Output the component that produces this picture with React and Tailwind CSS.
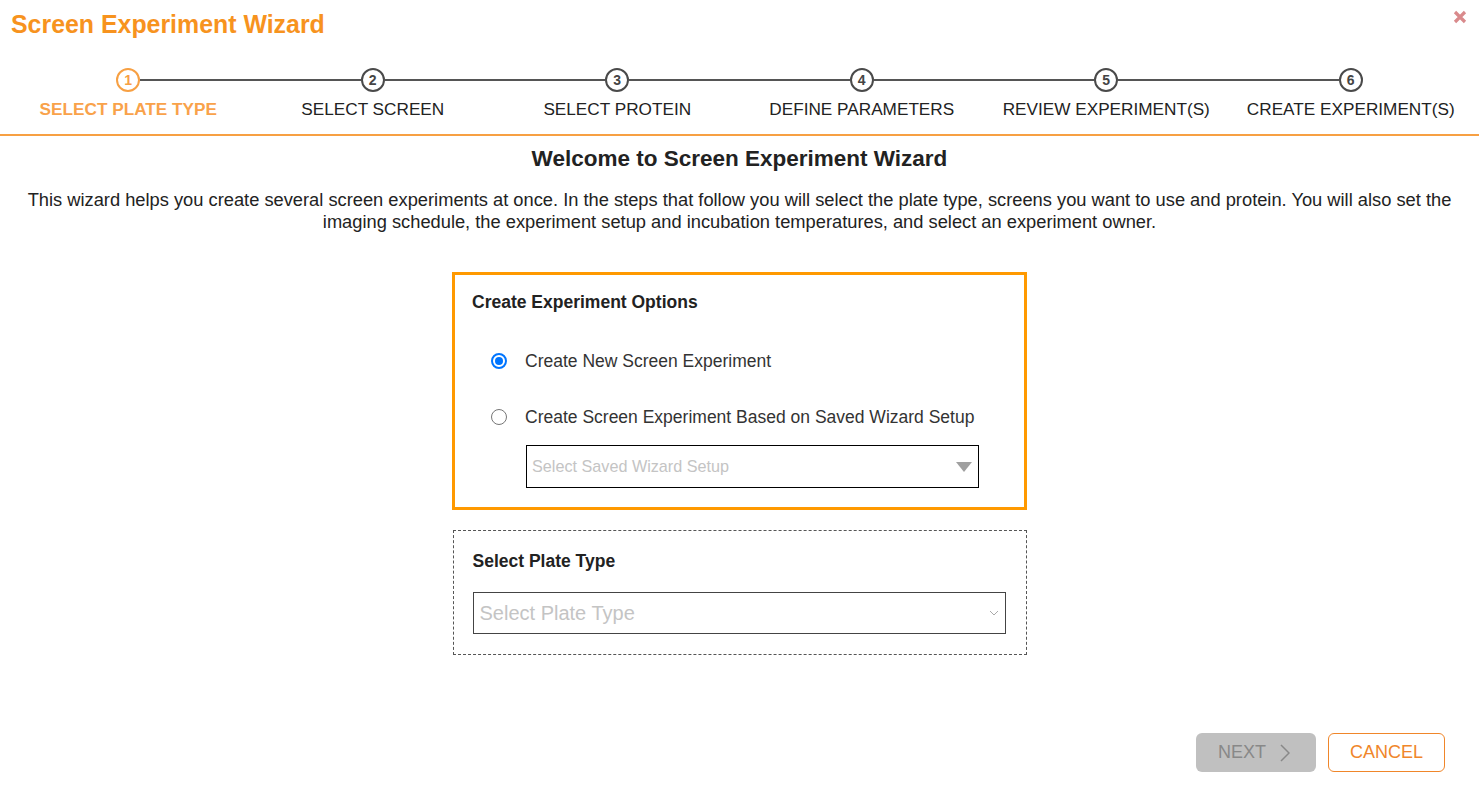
import React from "react";

const steps = [
  "SELECT PLATE TYPE",
  "SELECT SCREEN",
  "SELECT PROTEIN",
  "DEFINE PARAMETERS",
  "REVIEW EXPERIMENT(S)",
  "CREATE EXPERIMENT(S)",
];

function Step({ i, label }) {
  const active = i === 0;
  return (
    <div className="flex flex-col items-center">
      <div className="flex w-full items-center">
        <div className={`h-[2px] flex-1 ${i === 0 ? "bg-transparent" : "bg-[#555]"}`} />
        <div
          className={`flex h-[24px] w-[24px] items-center justify-center rounded-full border-2 text-[14px] font-bold leading-none ${
            active ? "border-[#f7a043] text-[#f7a043]" : "border-[#4a4a4a] text-[#444]"
          }`}
        >
          {i + 1}
        </div>
        <div className={`h-[2px] flex-1 ${i === 5 ? "bg-transparent" : "bg-[#555]"}`} />
      </div>
      <div
        className={`mt-[8px] whitespace-nowrap text-[17.2px] leading-[19px] ${
          active ? "font-bold text-[#f9a24a]" : "text-[#222]"
        }`}
      >
        {label}
      </div>
    </div>
  );
}

export default function App() {
  return (
    <div
      className="relative min-h-[790px] w-full bg-white text-[#222]"
      style={{ fontFamily: '"Liberation Sans", Arial, sans-serif' }}
    >
      <div className="flex items-start justify-between pl-[11px] pr-[12px] pt-[10px]">
        <h1 className="text-[24.9px] font-bold leading-[29px] text-[#f7931e]">Screen Experiment Wizard</h1>
        <svg width="14" height="14" viewBox="0 0 14 14" className="mt-[0px]">
          <path d="M2 2 L12 12 M12 2 L2 12" stroke="#d98a8c" strokeWidth="3.2" strokeLinecap="butt" />
        </svg>
      </div>

      <div className="mt-[29px] grid grid-cols-6 border-b-2 border-[#f7a043] px-[6px] pb-[15px]">
        {steps.map((s, i) => (
          <Step key={s} i={i} label={s} />
        ))}
      </div>

      <h2 className="mt-[10px] text-center text-[22.5px] font-bold leading-[26px] text-[#222]">
        Welcome to Screen Experiment Wizard
      </h2>
      <p className="mt-[17px] px-[14px] text-center text-[18.3px] leading-[22px] text-[#222]">
        This wizard helps you create several screen experiments at once. In the steps that follow you will select the plate type, screens you want to use and protein. You will also set the imaging schedule, the experiment setup and incubation temperatures, and select an experiment owner.
      </p>

      <div className="mx-auto mt-[39px] w-[575px] border-[3px] border-[#ff9900] pb-[19px] pl-[17px] pt-[17px]">
        <div className="text-[17.5px] font-bold leading-[20px] text-[#222]">Create Experiment Options</div>
        <div className="mt-[37px] flex h-[24px] items-center pl-[19px]">
          <div className="flex h-[16px] w-[16px] items-center justify-center rounded-full border-2 border-[#0075ff]">
            <div className="h-[8px] w-[8px] rounded-full bg-[#0075ff]" />
          </div>
          <span className="ml-[18px] text-[17.5px] text-[#333]">Create New Screen Experiment</span>
        </div>
        <div className="mt-[32px] flex h-[24px] items-center pl-[19px]">
          <div className="h-[16px] w-[16px] rounded-full border border-[#767676]" />
          <span className="ml-[18px] text-[17.5px] text-[#333]">Create Screen Experiment Based on Saved Wizard Setup</span>
        </div>
        <div className="ml-[54px] mt-[16px] flex h-[43px] w-[453px] items-center justify-between border border-black pl-[5px] pr-[6px]">
          <span className="text-[16.2px] text-[#c4c4c4]">Select Saved Wizard Setup</span>
          <svg width="16" height="10" viewBox="0 0 16 10">
            <path d="M0 0 H16 L8 10 Z" fill="#a0a0a0" />
          </svg>
        </div>
      </div>

      <div className="mx-auto mt-[20px] w-[574px] border border-dashed border-[#555] pb-[20px] pl-[19px] pr-[20px] pt-[20px]">
        <div className="text-[17.5px] font-bold leading-[20px] text-[#222]">Select Plate Type</div>
        <div className="mt-[21px] flex h-[42px] w-[533px] items-center justify-between border border-[#444] pl-[6px] pr-[6px]">
          <span className="text-[20px] text-[#c4c4c4]">Select Plate Type</span>
          <svg width="10" height="6" viewBox="0 0 10 6">
            <path d="M1 1 L5 5 L9 1" stroke="#aaa" strokeWidth="1" fill="none" />
          </svg>
        </div>
      </div>

      <div className="mt-[78px] flex justify-end gap-[12px] pr-[34px]">
        <button className="flex h-[39px] w-[120px] items-center justify-center gap-[14px] rounded-[6px] bg-[#c0c0c0] pr-[4px] text-[18px] text-[#888]">
          <span>NEXT</span>
          <svg width="10" height="18" viewBox="0 0 10 18">
            <path d="M1 1 L9 9 L1 17" stroke="#888" strokeWidth="1.5" fill="none" />
          </svg>
        </button>
        <button className="flex h-[39px] w-[117px] items-center justify-center rounded-[6px] border border-[#f0862a] bg-white text-[18px] text-[#f0862a]">
          CANCEL
        </button>
      </div>
    </div>
  );
}
